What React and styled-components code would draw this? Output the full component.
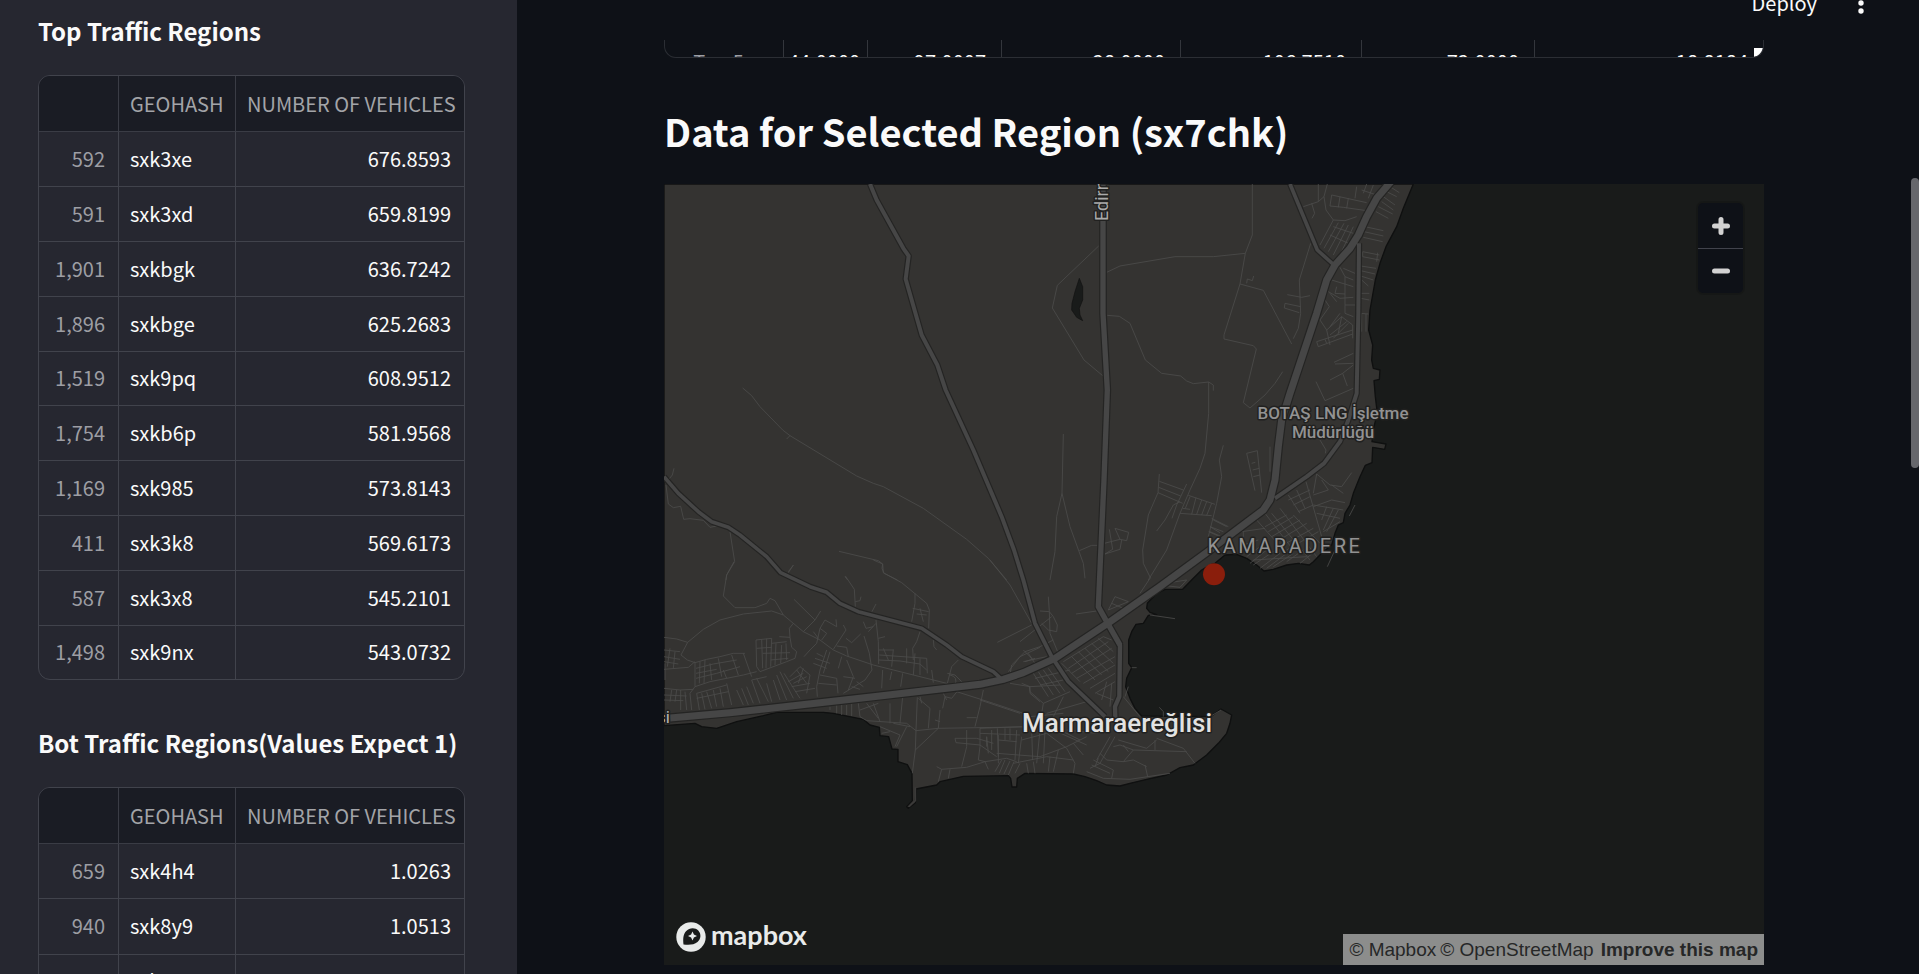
import React from "react";
import styled, { createGlobalStyle } from "styled-components";

const GlobalStyle = createGlobalStyle`
  *, *::before, *::after { box-sizing: border-box; }
  body {
    margin: 0;
    background: #0e1117;
    color: #fafafa;
    font-family: "Noto Sans CJK JP", "Noto Sans", sans-serif;
    font-size: 20px;
  }
`;

const Page = styled.div`
  display: flex;
  height: 100vh;
  overflow: hidden;
`;

const Sidebar = styled.aside`
  flex: 0 0 517px;
  padding: 15px 52px 0 38px;
  background: #262730;
  overflow: hidden;
`;

const SidebarTitle = styled.h3`
  margin: 0 0 28px;
  font-size: 24px;
  line-height: 32px;
  font-weight: 700;
  white-space: nowrap;
`;

const TableFrame = styled.div`
  height: 605px;
  margin-bottom: 47px;
  border: 1px solid #41434c;
  border-radius: 12px;
  overflow: hidden;
`;

const DataTable = styled.table`
  width: 100%;
  height: 603px;
  border-collapse: separate;
  border-spacing: 0;
  table-layout: fixed;
  line-height: 28px;

  tr:last-child > td { border-bottom: 0; }
`;

const Col = styled.col`
  width: ${(p) => p.$width};
`;

const Head = styled.th`
  height: 56px;
  padding: 0 11px;
  background: #1a1c24;
  border-bottom: 1px solid #3a3c45;
  border-right: ${(p) => (p.$last ? "0" : "1px solid #3a3c45")};
  color: #a3a4a8;
  font-weight: 400;
  text-align: left;
  white-space: nowrap;
`;

const Cell = styled.td`
  padding: 0 13px 0 11px;
  border-bottom: 1px solid #41434c;
  border-right: ${(p) => (p.$last ? "0" : "1px solid #41434c")};
  color: ${(p) => (p.$muted ? "#9d9ea4" : "#fafafa")};
  text-align: ${(p) => p.$align || "left"};
`;

const Main = styled.main`
  flex: 1;
  min-width: 0;
  display: flex;
  flex-direction: column;
`;

const Header = styled.header`
  height: 40px;
  display: flex;
  align-items: flex-end;
  overflow: hidden;
`;

const Toolbar = styled.div`
  flex: 1;
  height: 75px;
  display: flex;
  align-items: center;
  justify-content: flex-end;
  gap: 32px;
  padding-right: 38px;
`;

const DeployButton = styled.button`
  padding: 0;
  border: 0;
  background: none;
  color: #fafafa;
  font: inherit;
  line-height: 28px;
`;

const MenuButton = styled.button`
  width: 24px;
  height: 28px;
  padding: 0;
  border: 0;
  background: none;
  svg { display: block; margin: 0 auto; }
`;

const Content = styled.div`
  width: calc(100% - 294px);
  margin: 0 auto;
`;

const StatsFrame = styled.div`
  position: relative;
  height: 18px;
  border: 1px solid #2b2e34;
  border-top: 0;
  border-radius: 0 0 12px 12px;
  overflow: hidden;
`;

const StatsTable = styled.table`
  width: 100%;
  border-collapse: separate;
  border-spacing: 0;
  table-layout: fixed;
`;

const StatsCell = styled.td`
  height: 44px;
  padding: 0 15px 0 4px;
  border-right: ${(p) => (p.$last ? "0" : "1px solid #33363c")};
  color: ${(p) => (p.$muted ? "#9d9ea4" : "#fafafa")};
  text-align: ${(p) => (p.$muted ? "center" : "right")};
  line-height: 28px;
`;

const ResizeCorner = styled.span`
  position: absolute;
  right: 0;
  bottom: 0;
  width: 9px;
  height: 9px;
  background: #ffffff;
  border-bottom-right-radius: 9px;
`;

const RegionTitle = styled.h2`
  margin: 45px 0 25px;
  font-size: 38px;
  line-height: 56px;
  font-weight: 700;
  white-space: nowrap;
`;

const MapFrame = styled.section`
  position: relative;
  aspect-ratio: 1100 / 781;
  background: #191b1a;
  overflow: hidden;
  svg.map { display: block; width: 100%; height: 100%; }
`;

const ZoomGroup = styled.div`
  position: absolute;
  top: 19px;
  right: 21px;
  width: 45px;
  display: flex;
  flex-direction: column;
  border-radius: 5px;
  background: #0e1117;
  box-shadow: 0 0 0 2px rgba(0, 0, 0, 0.12);
`;

const ZoomButton = styled.button`
  height: 45px;
  padding: 0;
  border: 0;
  border-top: ${(p) => (p.$divided ? "1px solid #41434c" : "0")};
  background: none;
  svg { display: block; margin: 0 auto; }
`;

const MapLogo = styled.a`
  position: absolute;
  left: 12px;
  bottom: 10px;
  display: flex;
  align-items: center;
  gap: 5px;
  color: #e9ebea;
  font-family: Lato, sans-serif;
  font-size: 27px;
  line-height: 32px;
  font-weight: 700;
  text-decoration: none;
`;

const LogoWord = styled.span`
  padding-bottom: 4px;
`;

const Attribution = styled.div`
  position: absolute;
  right: 0;
  bottom: 0;
  display: flex;
  gap: 4px;
  padding: 0 6px;
  background: #8c8d8c;
  font-family: "Liberation Sans", Arial, sans-serif;
  font-size: 19px;
  line-height: 31px;
  white-space: nowrap;
`;

const CreditLink = styled.a`
  color: #262727;
  font-weight: ${(p) => (p.$strong ? 700 : 400)};
  margin-left: ${(p) => (p.$strong ? "3px" : "0")};
  text-decoration: none;
`;

const ScrollTrack = styled.div`
  flex: 0 0 8px;
  padding-top: 178px;
`;

const ScrollThumb = styled.div`
  height: 290px;
  border-radius: 4px;
  background: #66676c;
`;

const topRegions = [
  ["592", "sxk3xe", "676.8593"],
  ["591", "sxk3xd", "659.8199"],
  ["1,901", "sxkbgk", "636.7242"],
  ["1,896", "sxkbge", "625.2683"],
  ["1,519", "sxk9pq", "608.9512"],
  ["1,754", "sxkb6p", "581.9568"],
  ["1,169", "sxk985", "573.8143"],
  ["411", "sxk3k8", "569.6173"],
  ["587", "sxk3x8", "545.2101"],
  ["1,498", "sxk9nx", "543.0732"],
];

const bottomRegions = [
  ["659", "sxk4h4", "1.0263"],
  ["940", "sxk8y9", "1.0513"],
  ["896", "sxk8tv", "1.0526"],
];

const stats = ["44.0000", "97.0007", "28.0000", "106.7510", "72.0000", "18.8184"];

function RegionTable({ title, rows }) {
  return (
    <>
      <SidebarTitle>{title}</SidebarTitle>
      <TableFrame>
        <DataTable style={{ height: 56 + Math.round(rows.length * 54.7) }}>
          <colgroup>
            <Col $width="80px" />
            <Col $width="117px" />
            <Col $width="auto" />
          </colgroup>
          <thead>
            <tr>
              <Head aria-label="Index" />
              <Head>GEOHASH</Head>
              <Head $last>NUMBER OF VEHICLES</Head>
            </tr>
          </thead>
          <tbody>
            {rows.map(([index, hash, count]) => (
              <tr key={hash}>
                <Cell $muted $align="right">{index}</Cell>
                <Cell>{hash}</Cell>
                <Cell $last $align="right">{count}</Cell>
              </tr>
            ))}
          </tbody>
        </DataTable>
      </TableFrame>
    </>
  );
}

/* Land outline, in map units of a third of a pixel. */
const LAND =
  "M0 0H2248L2218 73 2198 128 2166 188 2148 238 2134 288 2126 333 2118 378 2114 438 2126 483 2123 528 2128 553 2148 558 2146 586 2130 590 2134 638 2140 688 2130 728 2124 773 2166 780 2162 796 2126 790 2124 836 2104 844 2088 878 2068 928 2058 963 2043 988 2038 1016 2023 1023 2013 1048 2003 1083 1973 1108 1948 1133 1936 1143 1903 1138 1868 1143 1828 1156 1800 1161 1778 1143 1748 1123 1718 1111 1683 1113 1653 1138 1638 1143 1613 1158 1588 1183 1556 1216 1503 1216 1478 1228 1450 1258 1448 1273 1458 1285 1478 1292 1453 1294 1438 1318 1416 1321 1403 1343 1394 1368 1394 1438 1403 1451 1388 1483 1385 1508 1398 1543 1413 1573 1433 1596 1640 1598 1671 1575 1703 1593 1698 1618 1688 1648 1663 1678 1628 1713 1588 1743 1548 1751 1508 1773 1448 1786 1398 1798 1368 1806 1328 1803 1298 1790 1263 1778 1228 1770 1083 1768 1060 1783 1058 1809 1044 1809 1040 1783 1033 1775 898 1777 828 1793 818 1803 756 1815 754 1856 733 1873 728 1868 745 1850 744 1768 730 1742 702 1733 702 1696 684 1695 674 1658 648 1655 646 1630 618 1623 598 1606 508 1588 478 1585 338 1585 298 1595 218 1613 158 1633 113 1628 93 1618 0 1625Z";

const ROADS = [
  [10, "M0 878L43 928 103 983 143 1013 193 1030 228 1053 308 1118 350 1166 438 1208 488 1225 528 1258 583 1283 773 1333 848 1383 893 1418 988 1463 1010 1483"],
  [11, "M618 0L638 48 718 193 734 216 725 285 773 453 820 543 845 618 928 798 1013 998 1050 1098 1078 1188 1113 1318 1163 1418 1213 1493 1323 1598"],
  [15, "M1317 0L1317 388 1330 618 1320 888 1303 1268 1331 1318 1368 1383"],
  [12, "M1331 1318L1368 1383 1366 1538 1353 1568 1354 1603"],
  [10, "M1878 0L1960 198 2010 243"],
  [11, "M2085 178L2083 388 2078 628 2053 708 2028 773 1980 838 1928 878 1833 943"],
  [20, "M18 1602L198 1586 408 1563 628 1538 848 1513 948 1501 1018 1486 1078 1466 1173 1423 1331 1318 1488 1208 1638 1098 1718 1038 1798 978 1818 948 1833 888 1843 788 1853 708 1878 628 1918 508 1958 388 1988 288 2013 243 2058 193 2083 153 2108 98 2138 43 2180 -6"],
];

/* Minor streets, grouped by the tile of the map they belong to. */
const STREETS = [
  {
    origin: [-12, -12],
    d: "M248 624L275 647 300 680 368 750 390 767 590 888 640 910 670 920 790 985 920 1078 985 1135 1040 1200 M380 777L390 767 M537 1114L655 1142 668 1152 666 1165 672 1180 712 1200 M42 865L37 885 25 900 M18 915L25 972 40 983 62 979 71 1018 90 1016 130 1021 150 1042 170 1038 M210 1055L224 1145 200 1185 198 1200 M400 1156L385 1175 M555 1190L563 1200",
  },
  {
    origin: [1068, -12],
    d: "M236 198L112 316 97 384 192 540 248 587 M260 277L300 258 465 230 580 230 676 220 697 165 697 12 M676 220L660 312 612 465 612 477 700 497 709 507 670 668 690 684 735 645 765 610 788 575 M660 312L730 331 815 492 M680 310L682 297 697 302 701 288 M262 406L298 409 330 430 376 540 425 580 482 588 500 603 520 611 566 606 580 615 580 632 M566 606L566 700 555 820 540 865 510 930 480 1000 440 1110 385 1200 M610 796L598 840 605 890 590 970 565 1070 M130 762L126 940 110 1010 105 1115 90 1200 M126 940L150 1040 190 1150 195 1195 M178 1112L215 1096 232 1096 M418 882L414 938 385 1005 368 1110 370 1150 392 1195 M418 904L490 930 M416 922L482 948 M414 938L488 970 M500 912L470 975 456 1015 M410 1053L435 1020 460 975 480 965 M505 946L585 973 M480 1000L575 1007 M488 985L510 988 M510 950L496 985 M528 953L515 1003 M545 960L530 1003 M560 965L545 1005 M575 970L560 1006 M575 1015L625 1040 M570 1040L600 1058 M566 1055L595 1068 M253 1090L300 1078 M268 1048L278 1108 255 1122 300 1108 305 1080 M285 1045L326 1057 320 1082 300 1078 Z M850 80L895 65 912 50 922 12 M895 12L895 65 M875 70L884 100 876 115 M848 80 M935 45L930 78 970 82 1040 92 M935 45L1040 68 M960 50L955 82 M985 55L980 85 M912 50L918 90 940 120 975 122 1010 110 M940 120L900 195 M955 128L912 205 M972 130L925 215 M985 135L940 225 M1000 140L960 225 M940 140L1000 160 M930 165L985 190 M1040 12L1030 40 M1060 15L1045 55 M1025 30L1070 45 M1010 20L1005 55 M1110 20L1138 38 M1100 35L1130 50 M1090 50L1125 75 M1085 65L1120 90 M1075 80L1118 102 M1068 95L1105 115 M1035 140L1090 152 M1032 155L1090 168 M1030 172L1088 185 M1028 215L1078 225 M1028 230L1078 240 M1028 215V230 M1073 218L1070 245 M1022 258L1068 265 M1022 272L1065 282 M1022 288L1060 300 M1025 300L1045 318 M1022 340L1048 340 M1022 355L1048 360 M1022 400L1045 402 M1025 402V455 M1038 402V455 M872 190L838 300 842 400 835 445 820 476 M802 344L845 352 870 347 M842 380L795 370 793 384 838 398 M935 300L1000 320 M925 335L960 355 1000 352 M975 290L975 400 1000 410 M950 320L945 340 975 342 M930 340L950 365 M915 360L928 380 900 420 920 450 930 495 M975 375H1005 M920 450L965 410 998 435 998 475 M930 465L980 425 M940 475L985 430 M965 410L955 460 M890 485L998 450 M895 500L998 462 M890 485L895 500 M915 478L920 490 M960 262L975 290 1000 300 M970 265L1005 280 M960 400L930 440 M942 547L1000 520 M945 552L1000 550 M930 600L968 580 1000 555 M968 580L982 618 M888 605L915 662 1000 625 M680 820L712 812 725 938 M680 820L705 932 M695 850L706 847 M698 870L718 865 M700 890L720 885 M750 800L750 875 M900 780L918 810 916 820 M890 882L930 915 965 920 995 878 M890 882L880 940 M905 900L925 930 880 945 M858 905L905 1070 M805 945L840 1000 M830 930L855 985 M805 960L870 930 M820 975L870 950 M835 995L880 975 M935 915L970 940 M880 975L970 990 M880 980L935 960 975 968 M890 1000L960 1015 M905 1020L920 980 M910 1050L940 985 M920 1055L955 990 M910 1055L960 1025 M735 1000L820 1110 M710 1020L790 1110 M755 1000L870 1140 M780 985L890 1130 M820 1005L900 1090 M735 1040L800 1005 M745 1055L820 1010 M755 1070L840 1020 M770 1085L860 1030 M780 1100L880 1045 M800 1110L895 1055 M665 1055L735 1045 M670 1055V1095L715 1080 M690 1150L740 1110 M700 1155L760 1115 M720 1165L780 1120 M740 1165L800 1120 M760 1160L820 1120 M800 1145L850 1110 M840 1150L890 1110 M680 1130L720 1100 M700 1140L860 1130 M1005 975L988 1008 M945 1110L922 1160",
  },
  {
    origin: [-12, 1128],
    d: "M222 5L200 45 190 108 225 143 285 143 320 130 330 115 345 122 370 165 M12 232L50 237 83 247 130 208 180 180 250 162 335 153 370 165 430 215 480 240 520 270 560 288 640 315 700 330 780 350 860 370 M83 247L63 285 82 300 105 308 M105 308V380 M402 118L465 180 430 215 M465 180L482 153 M640 0L668 12 670 38 725 68 800 130 808 150 806 205 M765 100V130L755 185 M758 145L806 155 M770 162L800 165 M780 145L790 185 M556 48L583 88 586 140 M586 125L600 122 603 110 M648 132L636 155 M400 15L385 38 M990 0L1050 75 1115 190 M1012 247L1115 195 M610 185L618 205 640 200 M648 180L655 245 656 312 M648 190L625 215 M655 235L675 230 M780 215L770 245 758 265 760 300 M820 240L822 260 830 270 M612 228L628 280 636 330 615 360 550 400 M470 250L480 205 495 180 530 200 528 178 M480 205L500 220 485 240 M460 215L475 235 M550 195L558 210 520 268 M558 235L575 248 602 222 M530 258L560 262 565 290 M470 250L450 270 432 290 M470 280L490 290 M465 295L510 310 M460 310L500 325 M500 270L480 330 470 380 472 410 M510 275L490 340 M545 290L535 325 M560 300L580 350 565 390 M480 345L530 355 534 400 M475 370L530 375 M550 350L585 355 M590 365L610 380 M575 380L600 388 M656 270H700 M658 285L800 295 802 340 M656 300L720 303 780 312 800 330 M670 265L685 300 M700 268L695 320 M740 265V310 M765 280L760 345 M780 295V345 M815 330L820 368 M668 330L665 385 M695 335L690 360 M728 340L722 380 M12 270L60 275 M12 290L60 298 M12 305L55 312 M12 328L85 322 105 305 M30 265L22 320 M45 275L40 325 M15 310V360 M12 385L60 390 100 388 M12 405L80 408 M12 420L70 422 M35 390L30 425 M50 390L45 425 M62 390V450 M75 395L80 450 M105 308L140 298 180 290 220 280 255 280 M108 325L160 312 230 300 M108 340L170 328 M108 355L170 340 240 320 M105 380L150 365 250 345 290 335 M120 305L118 370 M135 300L132 370 M150 310L155 360 M175 295L185 350 M190 330L200 355 M215 285L235 345 M250 280L275 350 M288 240L290 320 300 335 M288 240L335 235 332 320 M305 238L308 325 M320 236L318 325 M348 250L345 315 M365 255L362 310 M378 250L380 300 M335 250L380 245 M290 265L335 262 M308 280L390 278 M332 300L385 295 M358 230L390 232 395 262 410 275 405 295 380 305 300 335 M390 232L388 205 400 190 M105 380L90 400 95 450 M110 400L118 450 M125 400L135 448 M140 395L155 445 M160 390L170 440 M180 385L190 440 M200 370L215 435 M230 390L250 435 M245 385L265 435 M260 380L280 430 M275 360L300 430 M290 355L325 425 M320 370L335 425 M340 360L360 420 M350 345L380 420 M360 335L400 415 M372 340L420 415 M275 360L320 350 M110 400L200 375 M110 415L205 395 M390 350L420 320 450 345 M385 365L430 340 M400 370L440 350 M395 380L450 370 M410 330L440 370 M430 325L415 370 M450 345L440 400 M405 395L465 385 M510 440V450 M530 435V460 M545 435V465 M560 435V465 M575 432V468 M595 430L600 470 620 482 740 490 768 512 835 505 1140 500 M620 430L655 475 M600 450L655 430 M640 430L660 485 M690 430L690 490 M728 410L720 490 M772 412L768 512 766 570 757 640 M766 570L835 505 M775 415L810 445 805 505 M780 410L785 430 M840 450L835 505 M825 480L840 485 M660 500L720 525 705 560 M740 500L710 560 M665 520L690 515 M700 490L750 500 M890 395L1000 430 1090 460 M970 390L960 440 945 500 M920 473L950 473 M895 300L875 320 862 370 M862 340L885 345 905 365 M870 345Q895 350 885 375 M848 445L855 410 875 415 895 390 M860 420L850 400 M885 535H950L1000 550 M885 535L888 548 960 555 1010 590 M920 510V560L905 620 M960 505V560L955 600 975 605 985 628 M830 620L845 628 920 622 975 605 1040 595 1070 605 M845 628L835 665 M870 628L865 655 M980 530V560 M995 510V570 M1012 505L1015 590 M1015 540L1070 545 M1035 505V540 M1050 505V540 M1070 510L1065 600 M1025 600L1005 635 M1035 600L1018 640 M1050 603L1032 642 M1062 605L1045 645 M1080 610L1065 640 M1115 510L1118 600 M1045 335L1080 290 1140 262 M1090 270L1120 300 M1095 305L1125 295 M1085 370L1110 380 1110 400 1140 425",
  },
  {
    origin: [948, 948],
    d: "M180 333L208 335 220 350 232 375 230 395 205 390 M208 335L210 400 235 460 M120 425L215 350 M205 290L208 335 M185 370L205 390 M288 342L350 333 M385 330L405 290 445 305 M395 310L430 325 M385 330L445 305 M555 250L620 240 600 262 565 258 M510 235L480 280 M700 60L740 80 M690 80L730 95 M690 95L720 108 M90 525L95 495 135 455 180 440 220 420 M130 485L200 470 M145 460L165 490 M160 520L205 590 M175 515L220 585 M190 510L240 580 M205 505L255 575 M165 535L270 510 M180 555L250 540 M90 550L150 560 240 555 M148 560L150 575 190 610 185 640 M190 610L270 575 M200 640L320 605 M220 650L250 590 M150 650L250 640 M250 485L370 410 395 420 M265 505L385 425 M275 520L395 445 M290 535L405 470 M310 550L405 495 M330 565L405 520 M345 580L405 545 M245 490L300 545 M275 470L345 540 M295 455L365 525 M315 445L385 515 M335 430L400 490 M355 415L400 455 M380 545L365 600 M395 550L390 620 M350 580L400 600 M0 600L120 640 M0 685L125 680 M0 700L120 705 M20 710L25 760 M55 705V790 M125 710L115 790 M180 690L170 790 M195 690L190 790 M125 720L200 700 M50 760L180 770 260 740 320 710 M100 790L200 770 280 780 M140 790L145 820 M160 785L165 820 M210 770L205 815 M235 750L220 815 M260 745L285 790 280 820 M280 730L310 765 M200 700L260 745 M220 690L320 735 M260 690L350 700 M240 690L300 720 M350 700L370 690 M405 710L360 790 330 805 M390 710L350 780 M360 760L380 780 430 785 460 780 500 800 M400 740L420 735 460 750 430 785 M415 720L500 745 530 720 M430 735L445 755 M460 750L620 755 M530 715L610 745 645 790 M525 720V750 M340 780L400 810 395 835 M335 795L390 820 M320 815L370 835 450 838 570 820 M355 775L345 800 M495 795L503 830 M538 622L550 635V650 M510 345L585 356 M455 503H470 M430 590L480 650 M690 650L723 630 M445 560L435 590",
  },
];

function RegionMap() {
  return (
    <svg className="map" viewBox="0 0 1100 781" preserveAspectRatio="xMidYMid slice" role="img" aria-label="Map of Marmaraereğlisi">
      <g transform="scale(0.33333)" fill="none" strokeLinejoin="round">
        <path d={LAND} fill="#343331" stroke="#0f1010" strokeWidth="4" />
        <path d="M1246 283L1256 308 1256 348 1246 373 1248 393 1256 410 1238 400 1223 378 1224 358 1233 323Z" fill="#191b1a" stroke="#101111" strokeWidth="2" />
        {STREETS.map(({ origin, d }) => (
          <path key={d} d={d} transform={`translate(${origin[0]} ${origin[1]})`} stroke="#4c4c4b" strokeWidth="2.5" />
        ))}
        <path d="M754 1810V1850L735 1868" stroke="#3b3a39" strokeWidth="5" />
        {ROADS.map(([width, d]) => (
          <path key={d} d={d} stroke="#242423" strokeWidth={width + 8} />
        ))}
        {ROADS.map(([width, d]) => (
          <path key={d} d={d} stroke="#464646" strokeWidth={width + 1} />
        ))}
        <circle cx="1650" cy="1171" r="33" fill="#8a1e0c" />
      </g>
      <g fontFamily="Roboto, sans-serif" stroke="#212120" strokeWidth="3" strokeLinejoin="round" paintOrder="stroke" textAnchor="middle">
        <text x="453" y="548" fontSize="26" fontWeight="500" fill="#e2e2e2">Marmaraereğlisi</text>
        <text x="621" y="369" fontSize="20" letterSpacing="2.5" fill="#929292">KAMARADERE</text>
        <text x="669" y="235" fontSize="17" fontWeight="500" fill="#929292">BOTAŞ LNG İşletme</text>
        <text x="669" y="254" fontSize="17" fontWeight="500" fill="#929292">Müdürlüğü</text>
        <text transform="translate(444 37) rotate(-90)" textAnchor="start" fontSize="18" fill="#aaaaaa">Edirne</text>
        <text x="6" y="539" textAnchor="end" fontSize="17" fill="#b4b4b4">si</text>
      </g>
    </svg>
  );
}

export default function App() {
  return (
    <>
      <GlobalStyle />
      <Page>
        <Sidebar>
          <RegionTable title="Top Traffic Regions" rows={topRegions} />
          <RegionTable title="Bot Traffic Regions(Values Expect 1)" rows={bottomRegions} />
        </Sidebar>
        <Main>
          <Header>
            <Toolbar>
              <DeployButton type="button">Deploy</DeployButton>
              <MenuButton type="button" aria-label="Main menu">
                <svg width="6" height="22" viewBox="0 0 6 22" fill="#fafafa">
                  <circle cx="3" cy="3" r="2.7" />
                  <circle cx="3" cy="11" r="2.7" />
                  <circle cx="3" cy="19" r="2.7" />
                </svg>
              </MenuButton>
            </Toolbar>
          </Header>
          <Content>
            <StatsFrame>
              <StatsTable>
                <colgroup>
                  <Col $width="119px" />
                  <Col $width="84px" />
                  <Col $width="134px" />
                  <Col $width="179px" />
                  <Col $width="181px" />
                  <Col $width="173px" />
                  <Col $width="auto" />
                </colgroup>
                <tbody>
                  <tr>
                    <StatsCell $muted>Top 5</StatsCell>
                    {stats.map((value, i) => (
                      <StatsCell key={value} $last={i === stats.length - 1}>{value}</StatsCell>
                    ))}
                  </tr>
                </tbody>
              </StatsTable>
              <ResizeCorner />
            </StatsFrame>
            <RegionTitle>Data for Selected Region (sx7chk)</RegionTitle>
            <MapFrame>
              <RegionMap />
              <ZoomGroup>
                <ZoomButton type="button" aria-label="Zoom in">
                  <svg width="20" height="20" viewBox="0 0 20 20" stroke="#d2d2d2" strokeWidth="5" strokeLinecap="round">
                    <path d="M3.500 10H16.500M10 3.500V16.500" />
                  </svg>
                </ZoomButton>
                <ZoomButton type="button" aria-label="Zoom out" $divided>
                  <svg width="20" height="20" viewBox="0 0 20 20" stroke="#d2d2d2" strokeWidth="5" strokeLinecap="round">
                    <path d="M3.500 10H16.500" />
                  </svg>
                </ZoomButton>
              </ZoomGroup>
              <MapLogo href="#mapbox">
                <svg width="30" height="30" viewBox="0 0 30 30" aria-hidden="true">
                  <circle cx="15" cy="15" r="14.700" fill="#e9ebea" />
                  <path d="M7.500 22.500C7 17 7 12.500 10 9.200C13.500 5.300 19.200 5.200 22.300 8.500C25.500 12 25 17 21.500 20C18 23 13 23 7.500 22.500Z" fill="#191b1a" />
                  <path d="M16.500 9.500L17.900 12.600 21 14 17.900 15.400 16.500 18.500 15.100 15.400 12 14 15.100 12.600Z" fill="#e9ebea" />
                </svg>
                <LogoWord>mapbox</LogoWord>
              </MapLogo>
              <Attribution>
                <CreditLink href="#about-mapbox">© Mapbox</CreditLink>
                <CreditLink href="#openstreetmap">© OpenStreetMap</CreditLink>
                <CreditLink href="#improve" $strong>Improve this map</CreditLink>
              </Attribution>
            </MapFrame>
          </Content>
        </Main>
        <ScrollTrack aria-hidden="true">
          <ScrollThumb />
        </ScrollTrack>
      </Page>
    </>
  );
}
